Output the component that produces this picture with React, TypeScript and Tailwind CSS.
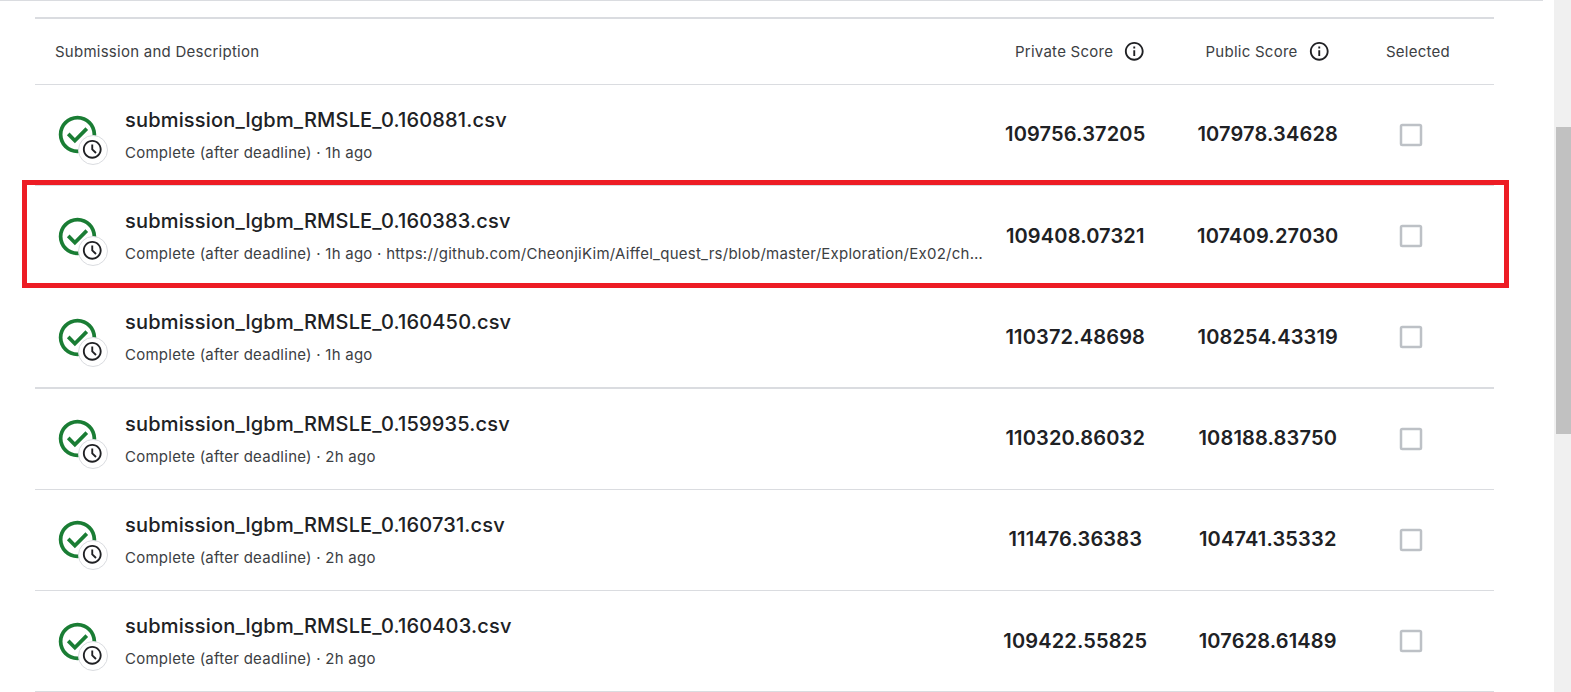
type Submission = {
  name: string;
  age: string;
  description?: string;
  privateScore: string;
  publicScore: string;
  rowClass: string;
  checkClass: string;
  scoreClass: string;
};

const submissions: Submission[] = [
  { name: "submission_lgbm_RMSLE_0.160881.csv", age: "1h ago", privateScore: "109756.37205", publicScore: "107978.34628", rowClass: "h-[101px] border-b", checkClass: "", scoreClass: "pb-0.5" },
  {
    name: "submission_lgbm_RMSLE_0.160383.csv",
    age: "1h ago",
    description: "https://github.com/CheonjiKim/Aiffel_quest_rs/blob/master/Exploration/Ex02/ch…",
    privateScore: "109408.07321",
    publicScore: "107409.27030",
    rowClass: "h-[101px] border-b",
    checkClass: "translate-y-px",
    scoreClass: "",
  },
  { name: "submission_lgbm_RMSLE_0.160450.csv", age: "1h ago", privateScore: "110372.48698", publicScore: "108254.43319", rowClass: "h-[102px] border-b-2", checkClass: "translate-y-px", scoreClass: "" },
  { name: "submission_lgbm_RMSLE_0.159935.csv", age: "2h ago", privateScore: "110320.86032", publicScore: "108188.83750", rowClass: "h-[101px] border-b", checkClass: "", scoreClass: "pb-0.5" },
  { name: "submission_lgbm_RMSLE_0.160731.csv", age: "2h ago", privateScore: "111476.36383", publicScore: "104741.35332", rowClass: "h-[101px] border-b", checkClass: "", scoreClass: "pb-0.5" },
  { name: "submission_lgbm_RMSLE_0.160403.csv", age: "2h ago", privateScore: "109422.55825", publicScore: "107628.61489", rowClass: "h-[101px] border-b", checkClass: "translate-y-px", scoreClass: "" },
];

function InfoIcon() {
  return (
    <svg viewBox="0 0 24 24" className="-mt-px size-[22.5px] shrink-0 fill-[#202124]">
      <path d="M11 7h2v2h-2zm0 4h2v6h-2zm1-9C6.48 2 2 6.48 2 12s4.48 10 10 10 10-4.48 10-10S17.52 2 12 2zm0 18c-4.41 0-8-3.59-8-8s3.59-8 8-8 8 3.59 8 8-3.59 8-8 8z" />
    </svg>
  );
}

function CheckboxIcon() {
  return (
    <svg viewBox="0 0 30 30" className="ml-[26px] size-[30px] shrink-0 fill-none stroke-[#bdc1c6]">
      <rect x="5" y="5" width="20" height="20" rx="1.25" strokeWidth="2.5" />
    </svg>
  );
}

function StatusIcon({ checkClass }: { checkClass: string }) {
  return (
    <div className="relative mt-[27px] h-[54px] w-[70px] shrink-0">
      <svg viewBox="0 0 24 24" className={`size-[45px] fill-[#1a7d34] ${checkClass}`}>
        <path d="m10.6 16.6 7.05-7.05-1.4-1.4-5.65 5.65-2.85-2.85-1.4 1.4zM12 2C6.48 2 2 6.48 2 12s4.48 10 10 10 10-4.48 10-10S17.52 2 12 2zm0 18c-4.42 0-8-3.58-8-8s3.58-8 8-8 8 3.58 8 8-3.58 8-8 8z" />
      </svg>
      <span className="absolute top-[23px] left-[23px] size-[30px] rounded-full border border-[#dadce0] bg-white pt-[2px] pl-[2px]">
        <svg viewBox="0 0 24 24" className="size-[22.5px] fill-[#202124]">
          <path d="m15.3 16.7 1.4-1.4-3.7-3.7V7h-2v5.4zM12 2C6.48 2 2 6.48 2 12s4.48 10 10 10 10-4.48 10-10S17.52 2 12 2zm0 18c-4.42 0-8-3.58-8-8s3.58-8 8-8 8 3.58 8 8-3.58 8-8 8z" />
        </svg>
      </span>
    </div>
  );
}

function Row({ item }: { item: Submission }) {
  return (
    <li className={`flex border-[#dadce0] pl-5 ${item.rowClass}`}>
      <StatusIcon checkClass={item.checkClass} />
      <div className="w-[860px] shrink-0 pt-[22px]">
        <div className="text-[20px] leading-[27px] font-medium tracking-[0.18px] text-[#202124]">{item.name}</div>
        <div className="mt-[9px] text-[15px] leading-5 tracking-[0.25px] whitespace-nowrap text-[#3c4043]">
          Complete (after deadline) · {item.age}
          {item.description ? ` · ${item.description}` : ""}
        </div>
      </div>
      <div className="flex h-full items-center">
        <div className={`flex text-[20px] leading-[25px] font-semibold tracking-[0.16px] text-[#202124] ${item.scoreClass}`}>
          <span className="w-[180.5px] text-center">{item.privateScore}</span>
          <span className="w-[204.5px] text-center">{item.publicScore}</span>
        </div>
        <CheckboxIcon />
      </div>
    </li>
  );
}

export default function App() {
  return (
    <div className="flex h-[692px] w-[1571px] overflow-hidden bg-white font-['Inter',sans-serif]">
      <main className="relative h-full w-[1543px] shrink-0 border-t border-[#dadce0] pt-4 pl-[35px]">
        <div className="w-[1459px] border-t-2 border-[#dadce0]">
          <div className="flex h-[66px] items-center border-b border-[#dadce0] pl-5 text-[15px] leading-5 tracking-[0.25px] text-[#3c4043]">
            <span className="w-[960px]">Submission and Description</span>
            <span className="flex w-[190.5px] items-center gap-[10px]">Private Score <InfoIcon /></span>
            <span className="flex w-[180.5px] items-center gap-[10px]">Public Score <InfoIcon /></span>
            <span>Selected</span>
          </div>
          <ul>
            {submissions.map((item) => (
              <Row key={item.name} item={item} />
            ))}
          </ul>
        </div>
        <div className="pointer-events-none absolute top-[179px] left-[22px] h-[108px] w-[1487px] border-[5px] border-[#ed1c24]" />
      </main>
      <div className="ml-[11px] flex flex-1 flex-col bg-[#f0f0f0] pt-[127px] pl-[2px]">
        <div className="h-[307px] bg-[#c1c1c1]" />
      </div>
    </div>
  );
}
